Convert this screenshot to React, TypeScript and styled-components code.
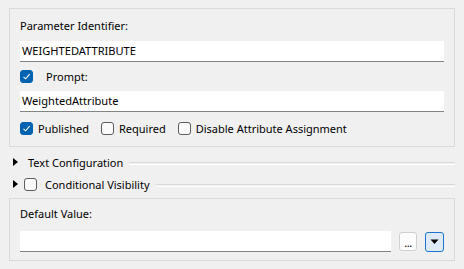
import React from 'react'
import styled, { createGlobalStyle } from 'styled-components'

const GlobalStyle = createGlobalStyle`
  html, body {
    margin: 0;
    background: #f0f0f0;
  }
  body {
    font-family: 'Noto Sans', 'Open Sans', sans-serif;
    font-size: 11px;
    color: #000;
  }
`

interface CheckProps {
  checked?: boolean
}

const Check: React.FC<CheckProps> = ({ checked }) => (
  <CheckBox checked={checked}>
    {checked && (
      <svg width="9" height="9" viewBox="0 0 9 9">
        <path d="M1.5 4.8 L3.6 6.8 L7.6 2.2" fill="none" stroke="#fff" strokeWidth="1.1" />
      </svg>
    )}
  </CheckBox>
)

const App: React.FC = () => {
  return (
    <Page>
      <GlobalStyle />
      <GroupBox>
        <FieldLabel>Parameter Identifier:</FieldLabel>
        <TextInput>WEIGHTEDATTRIBUTE</TextInput>
        <CheckRow>
          <Check checked />
          <PromptText>Prompt:</PromptText>
        </CheckRow>
        <TextInput>WeightedAttribute</TextInput>
        <OptionRow>
          <Option>
            <Check checked />
            <span>Published</span>
          </Option>
          <Option>
            <Check />
            <span>Required</span>
          </Option>
          <Option>
            <Check />
            <span>Disable Attribute Assignment</span>
          </Option>
        </OptionRow>
      </GroupBox>

      <Sections>
        <Section>
          <Arrow />
          <SectionTitle indent={4}>Text Configuration</SectionTitle>
          <Rule />
        </Section>
        <Section>
          <Arrow />
          <Check />
          <SectionTitle indent={2}>Conditional Visibility</SectionTitle>
          <Rule />
        </Section>
      </Sections>

      <GroupBox bottom>
        <FieldLabel>Default Value:</FieldLabel>
        <ValueRow>
          <TextInput grow />
          <DotsButton>...</DotsButton>
          <MenuButton>
            <svg width="9" height="6" viewBox="0 0 9 6">
              <path d="M0.5 0.5 H8.5 L4.5 5 Z" fill="#000" />
            </svg>
          </MenuButton>
        </ValueRow>
      </GroupBox>
    </Page>
  )
}

const Page = styled.div`
  display: flex;
  flex-direction: column;
  padding: 8px 9px;
  width: 464px;
  height: 269px;
  box-sizing: border-box;
`

const GroupBox = styled.div<{ bottom?: boolean }>`
  display: flex;
  flex-direction: column;
  border: 1px solid #dadada;
  padding: ${({ bottom }) => (bottom ? '6px 10px 8px 10px' : '8px 10px 9px 10px')};
`

const FieldLabel = styled.div`
  line-height: 18px;
  margin-bottom: 6px;
`

const TextInput = styled.div<{ grow?: boolean }>`
  height: 20px;
  line-height: 20px;
  background: #fff;
  border-bottom: 1px solid #838383;
  padding: 0 2px;
  flex: ${({ grow }) => (grow ? '1' : 'none')};
  font-size: 11.1px;
`

const CheckRow = styled.div`
  display: flex;
  align-items: center;
  height: 18px;
  margin: 5px 0 6px 0;
`

const PromptText = styled.span`
  margin-left: 13px;
`

const OptionRow = styled.div`
  display: flex;
  align-items: center;
  gap: 12px;
  margin-top: 7px;
  height: 18px;
`

const Option = styled.label`
  display: flex;
  align-items: center;
  gap: 5px;
`

const CheckBox = styled.span<{ checked?: boolean }>`
  display: inline-flex;
  align-items: center;
  justify-content: center;
  width: 13px;
  height: 13px;
  box-sizing: border-box;
  border-radius: 3px;
  background: ${({ checked }) => (checked ? '#0063b1' : '#fafafa')};
  border: 1px solid ${({ checked }) => (checked ? '#0063b1' : '#5c5c5c')};
  flex: none;
`

const Sections = styled.div`
  display: flex;
  flex-direction: column;
  padding: 4px 0 3px 0;
`

const Section = styled.div`
  display: flex;
  align-items: center;
  gap: 6px;
  height: 22px;
  padding-left: 4px;
`

const Arrow = styled.span`
  width: 0;
  height: 0;
  border-top: 4px solid transparent;
  border-bottom: 4px solid transparent;
  border-left: 5px solid #000;
  flex: none;
`

const SectionTitle = styled.span<{ indent: number }>`
  margin-left: ${({ indent }) => indent}px;
`

const Rule = styled.span`
  flex: 1;
  height: 1px;
  border-top: 1px solid #dadada;
  border-bottom: 1px solid #ffffff;
  margin-top: 2px;
`

const ValueRow = styled.div`
  display: flex;
  align-items: center;
  gap: 8px;
  margin-top: 2px;
`

const DotsButton = styled.div`
  width: 18px;
  height: 19px;
  box-sizing: border-box;
  border: 1px solid #d0d0d0;
  border-radius: 3px;
  background: #fdfdfd;
  display: flex;
  align-items: flex-end;
  justify-content: center;
  line-height: 14px;
  font-size: 11px;
  letter-spacing: -0.5px;
`

const MenuButton = styled.div`
  width: 19px;
  height: 20px;
  box-sizing: border-box;
  border: 1px solid #1a74d0;
  border-radius: 3px;
  background: #dfeaf7;
  display: flex;
  align-items: center;
  justify-content: center;
`

export default App
